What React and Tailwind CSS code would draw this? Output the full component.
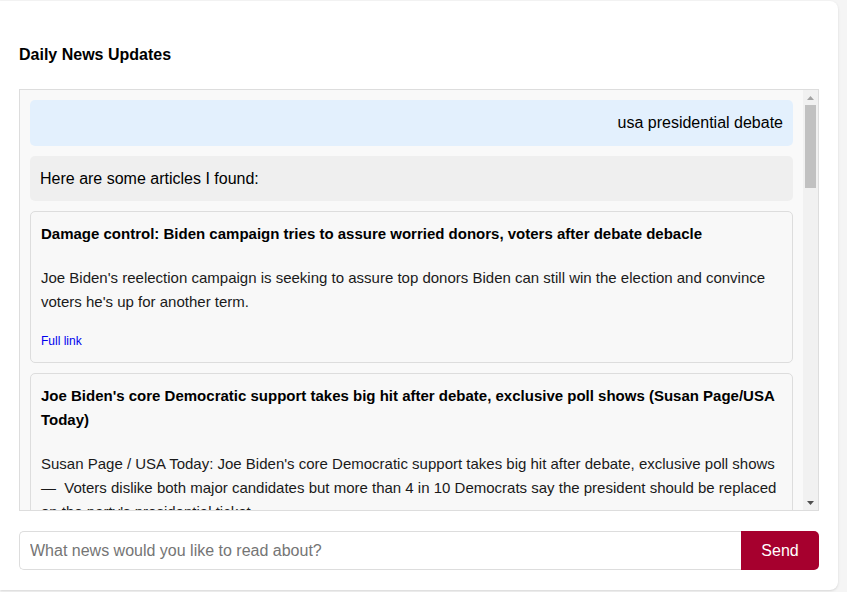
import React from 'react';

const articles = [
  {
    title: 'Damage control: Biden campaign tries to assure worried donors, voters after debate debacle',
    description:
      "Joe Biden's reelection campaign is seeking to assure top donors Biden can still win the election and convince voters he's up for another term.",
  },
  {
    title:
      "Joe Biden's core Democratic support takes big hit after debate, exclusive poll shows (Susan Page/USA Today)",
    description:
      "Susan Page / USA Today: Joe Biden's core Democratic support takes big hit after debate, exclusive poll shows — \u00a0Voters dislike both major candidates but more than 4 in 10 Democrats say the president should be replaced on the party's presidential ticket.",
  },
  {
    title: 'Trump and Biden clash over economy, immigration in first presidential debate',
    description:
      'The two candidates traded sharp attacks on inflation, the border and foreign policy during the 90-minute debate hosted in Atlanta.',
  },
];

const ArticleCard = ({ article }) => (
  <div className="shrink-0 rounded-[5px] border border-[#dddddd] bg-[#f8f8f8] px-2.5 py-2.5">
    <h3 className="mb-5 text-[15px] font-bold leading-6 text-black">{article.title}</h3>
    <p className="mb-4 text-[15px] leading-6 text-[#1a1a1a]">{article.description}</p>
    <a href="#" className="block text-xs leading-[22px] text-[#0000ee]">
      Full link
    </a>
  </div>
);

// drawn scrollbar, the page's native one is hidden in headless mode
const Scrollbar = () => (
  <div className="flex w-[15px] shrink-0 flex-col bg-[#f1f1f1]">
    <div className="flex h-[15px] items-center justify-center">
      <svg width="7" height="4" viewBox="0 0 7 4">
        <path d="M0 4 L3.5 0 L7 4 Z" fill="#a3a3a3" />
      </svg>
    </div>
    <div className="flex-1 px-0.5">
      <div className="h-[83px] bg-[#c1c1c1]" />
    </div>
    <div className="flex h-[15px] items-center justify-center">
      <svg width="7" height="4" viewBox="0 0 7 4">
        <path d="M0 0 L7 0 L3.5 4 Z" fill="#505050" />
      </svg>
    </div>
  </div>
);

const App = () => {
  return (
    <div
      className="min-h-screen bg-[#f5f5f5] pr-2 pt-px pb-0.5"
      style={{ fontFamily: '"Liberation Sans", Arial, sans-serif' }}
    >
      <div className="flex h-[589px] w-[838px] flex-col rounded-r-lg bg-white px-[19px] pb-5 pt-[44px] shadow-sm">
        {/* Header */}
        <h2 className="mb-[24px] text-base font-bold leading-5 text-black">Daily News Updates</h2>

        {/* Chat window */}
        <div className="flex h-[422px] border border-[#dddddd] bg-[#f9f9f9]">
          <div className="flex flex-1 flex-col gap-2.5 overflow-hidden p-2.5">
            <div className="shrink-0 rounded-[5px] bg-[#e3f0fd] px-2.5 py-2.5 text-right text-base leading-[26px] text-black">
              usa presidential debate
            </div>
            <div className="shrink-0 rounded-[5px] bg-[#efefef] px-2.5 py-2.5 text-base leading-[25px] text-black">
              Here are some articles I found:
            </div>
            {articles.map((article) => (
              <ArticleCard key={article.title} article={article} />
            ))}
          </div>
          <Scrollbar />
        </div>

        {/* Input row */}
        <div className="mt-5 flex h-[39px]">
          <input
            type="text"
            placeholder="What news would you like to read about?"
            className="flex-1 rounded-l-[5px] border border-r-0 border-[#dddddd] px-2.5 text-base text-black placeholder:text-[#757575] outline-none"
          />
          <button className="w-[78px] rounded-r-[5px] bg-[#a6002e] text-base text-white">Send</button>
        </div>
      </div>
    </div>
  );
};

export default App;
